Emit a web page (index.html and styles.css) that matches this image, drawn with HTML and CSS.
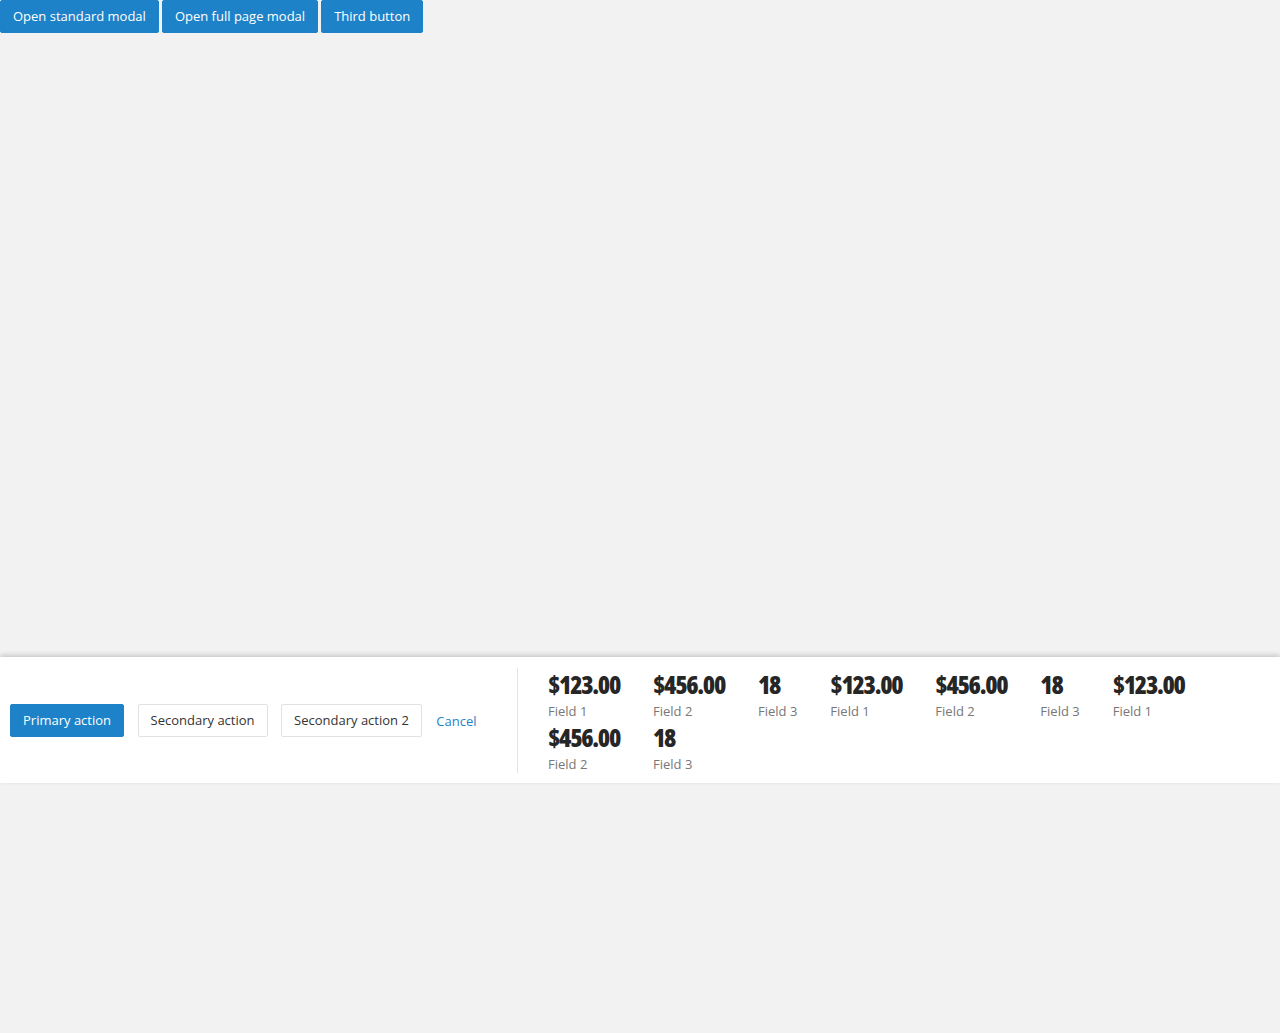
FILE: index.html
```html
<!DOCTYPE html>
<html>
<head>
<meta charset="utf-8">
<link rel="stylesheet" href="styles.css">
</head>
<body>
<div class="topbar">
  <button class="btn btn-primary">Open standard modal</button>
  <button class="btn btn-primary">Open full page modal</button>
  <button class="btn btn-primary">Third button</button>
</div>
<div class="stage"></div>
<footer class="actionbar">
  <div class="actions">
    <button class="btn btn-primary">Primary action</button>
    <button class="btn btn-secondary">Secondary action</button>
    <button class="btn btn-secondary">Secondary action 2</button>
    <a class="link-cancel" href="#">Cancel</a>
  </div>
  <div class="summary">
    <div class="item"><div class="value">$123.00</div><div class="label">Field 1</div></div>
    <div class="item"><div class="value">$456.00</div><div class="label">Field 2</div></div>
    <div class="item"><div class="value">18</div><div class="label">Field 3</div></div>
    <div class="item"><div class="value">$123.00</div><div class="label">Field 1</div></div>
    <div class="item"><div class="value">$456.00</div><div class="label">Field 2</div></div>
    <div class="item"><div class="value">18</div><div class="label">Field 3</div></div>
    <div class="item"><div class="value">$123.00</div><div class="label">Field 1</div></div>
    <div class="item"><div class="value">$456.00</div><div class="label">Field 2</div></div>
    <div class="item"><div class="value">18</div><div class="label">Field 3</div></div>
  </div>
</footer>
</body>
</html>
```
FILE: styles.css
```css
html, body {
  margin: 0;
  padding: 0;
}
body {
  background: #f2f2f2;
  font-family: "Open Sans", "Noto Sans", sans-serif;
  font-size: 13px;
  color: #333;
  height: 1033px;
}
.topbar {
  display: flex;
  gap: 3px;
}
.btn {
  font-family: "Open Sans", "Noto Sans", sans-serif;
  font-size: 13px;
  height: 33px;
  padding: 0 12px;
  border-radius: 2px;
  cursor: pointer;
  line-height: 31px;
}
.btn-primary {
  background: #1e82c8;
  color: #fff;
  border: 1px solid #1e82c8;
  font-weight: 500;
}
.btn-secondary {
  background: #fff;
  color: #333;
  border: 1px solid #e1e1e1;
}
.stage {
  height: 624px;
}
.actionbar {
  background: #fff;
  box-shadow: 0 -2px 5px rgba(0, 0, 0, 0.18);
  display: flex;
  align-items: stretch;
  padding: 11px 0 10px;
  height: 126px;
  box-sizing: border-box;
}
.actions {
  display: flex;
  align-items: center;
  gap: 13.5px;
  padding-left: 10px;
  width: 507px;
  border-right: 1px solid #e5e5e5;
}
.link-cancel {
  color: #1e82c8;
  text-decoration: none;
  margin-left: 1px;
}
.summary {
  flex: 1;
  display: flex;
  flex-wrap: wrap;
  align-content: flex-start;
  padding-left: 30px;
  padding-top: 2px;
}
.item {
  margin-right: 33px;
  height: 53px;
}
.value {
  font-family: "Open Sans", "Roboto Condensed", sans-serif;
  font-stretch: 75%;
  font-weight: 800;
  font-size: 25px;
  line-height: 28px;
  color: #262626;
  letter-spacing: -1.3px;
}
.label {
  font-size: 13px;
  color: #777;
  line-height: 18px;
  margin-top: 4px;
}
```
